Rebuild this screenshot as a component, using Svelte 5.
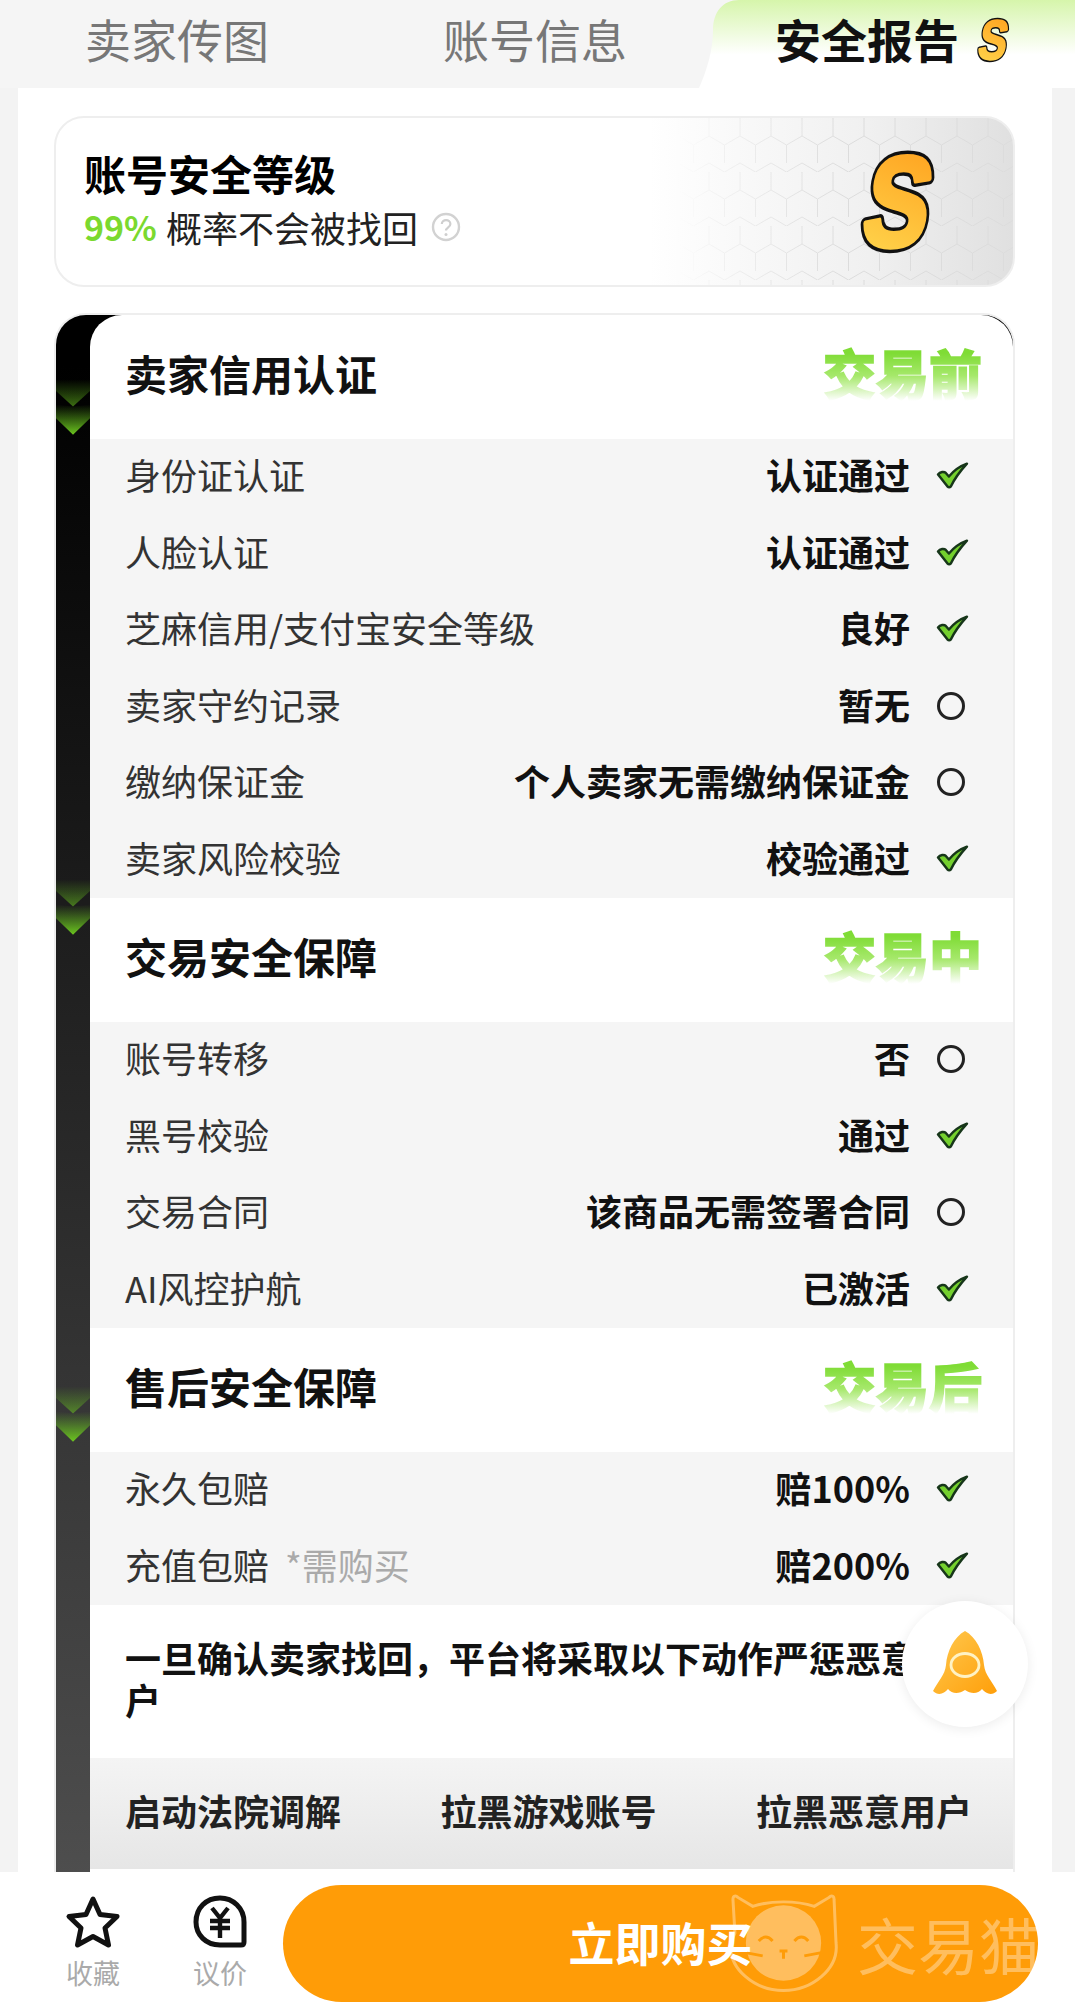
<script lang="ts">
  const sections = [
    {
      title: '卖家信用认证', stage: '交易前', arrowTop: 64,
      rows: [
        { label: '身份证认证', value: '认证通过', ok: true },
        { label: '人脸认证', value: '认证通过', ok: true },
        { label: '芝麻信用/支付宝安全等级', value: '良好', ok: true },
        { label: '卖家守约记录', value: '暂无', ok: false },
        { label: '缴纳保证金', value: '个人卖家无需缴纳保证金', ok: false },
        { label: '卖家风险校验', value: '校验通过', ok: true }
      ]
    },
    {
      title: '交易安全保障', stage: '交易中', arrowTop: 564,
      rows: [
        { label: '账号转移', value: '否', ok: false },
        { label: '黑号校验', value: '通过', ok: true },
        { label: '交易合同', value: '该商品无需签署合同', ok: false },
        { label: 'AI风控护航', value: '已激活', ok: true }
      ]
    },
    {
      title: '售后安全保障', stage: '交易后', arrowTop: 1071,
      rows: [
        { label: '永久包赔', value: '赔100%', ok: true },
        { label: '充值包赔', note: '*需购买', value: '赔200%', ok: true }
      ]
    }
  ];

  const actions = ['启动法院调解', '拉黑游戏账号', '拉黑恶意用户'];
</script>

{#snippet badge(cls)}
  <svg class={cls} viewBox="0 0 90 106" aria-hidden="true">
    <defs>
      <linearGradient id="{cls}-fill" x1="0.6" y1="0" x2="0.4" y2="1">
        <stop offset="0" stop-color="#ff9f1c" />
        <stop offset="1" stop-color="#ffd84f" />
      </linearGradient>
    </defs>
    <g transform="translate(40 97) skewX(-10) scale(0.76 1)">
      <text text-anchor="middle" class="badge-letter outline">S</text>
      <text text-anchor="middle" class="badge-letter" fill="url(#{cls}-fill)" stroke="url(#{cls}-fill)">S</text>
    </g>
  </svg>
{/snippet}

<div class="page">
  <nav class="tabs">
    <div class="tab first">卖家传图</div>
    <div class="tab second">账号信息</div>
    <div class="tab active">
      <span>安全报告</span>
      {@render badge('badge-small')}
    </div>
  </nav>

  <main class="content">
    <section class="level">
      <svg class="hex" aria-hidden="true">
        <defs>
          <pattern id="hexes" width="31" height="54" patternUnits="userSpaceOnUse">
            <path d="M15.5 -9 L31 0 V18 L15.5 27 L0 18 V0 Z M15.5 27 V45 M0 45 L15.5 54 L31 45" fill="none" stroke="#dcdcdc" stroke-width="1" />
          </pattern>
          <linearGradient id="hex-fade" x1="0" x2="1" y1="0" y2="0">
            <stop offset="0" stop-color="#000" />
            <stop offset="0.5" stop-color="#fff" />
          </linearGradient>
          <mask id="hex-mask"><rect width="100%" height="100%" fill="url(#hex-fade)" /></mask>
        </defs>
        <rect width="100%" height="100%" fill="url(#hexes)" mask="url(#hex-mask)" />
      </svg>
      <div class="level-text">
        <h2>账号安全等级</h2>
        <p>
          <b>99%</b> 概率不会被找回
          <svg class="help" viewBox="0 0 30 30" aria-hidden="true">
            <circle cx="15" cy="15" r="13" fill="none" stroke="#d2d2d2" stroke-width="2.4" />
            <path d="M10.8 12 C10.8 6.8 19.4 7 19.4 12 C19.4 15.2 15 15.4 15 18.6" fill="none" stroke="#cfcfcf" stroke-width="2.2" />
            <circle cx="15" cy="22.4" r="1.5" fill="#cfcfcf" />
          </svg>
        </p>
      </div>
      {@render badge('badge-large')}
    </section>

    <section class="report">
      {#each sections as section}
        <svg class="arrows" style="top: {section.arrowTop}px" viewBox="0 0 35 58" aria-hidden="true">
          <defs>
            <linearGradient id="arrow-{section.arrowTop}" x1="0" x2="0" y1="0" y2="1">
              <stop offset="0" stop-color="#5fb81c" stop-opacity="0" />
              <stop offset="1" stop-color="#6cc61f" />
            </linearGradient>
          </defs>
          <path d="M0 0 H35 V12 L17.5 28 L0 12 Z" fill="url(#arrow-{section.arrowTop})" opacity="0.55" />
          <path d="M0 26 L17.5 28 L35 26 V40 L17.5 57 L0 40 Z" fill="url(#arrow-{section.arrowTop})" />
        </svg>
      {/each}

      <div class="report-body">
        {#each sections as section}
          <header class="section-head">
            <h3>{section.title}</h3>
            <span class="stage">{section.stage}</span>
          </header>
          <ul class="rows">
            {#each section.rows as row}
              <li>
                <span class="label">{row.label}{#if row.note}<em>{row.note}</em>{/if}</span>
                <strong>{row.value}</strong>
                {#if row.ok}
                  <svg class="mark" viewBox="0 0 32 27" aria-hidden="true">
                    <path d="M2 13 C4 10 8 10 9.5 11.5 L12.5 15 C17 9.5 23 5 30 2.5 C25 8 19 15 14.5 24.5 C13.5 25.5 12 25.5 11 24.5 Z" fill="#74d02e" stroke="#17361a" stroke-width="2.4" stroke-linejoin="round" />
                  </svg>
                {:else}
                  <span class="mark empty"></span>
                {/if}
              </li>
            {/each}
          </ul>
        {/each}

        <p class="notice">一旦确认卖家找回，平台将采取以下动作严惩恶意用户</p>
        <div class="actions">
          {#each actions as action}
            <span>{action}</span>
          {/each}
        </div>
      </div>
    </section>
  </main>

  <footer class="bar">
    <div class="bar-item">
      <svg viewBox="0 0 56 52" aria-hidden="true">
        <path d="M28 3 L35 18.5 L52 20.5 L40 32 L43.5 49 L28 40.5 L12.5 49 L16 32 L4 20.5 L21 18.5 Z" fill="none" stroke="#111" stroke-width="5" stroke-linejoin="round" />
      </svg>
      <span>收藏</span>
    </div>
    <div class="bar-item">
      <svg viewBox="0 0 56 54" aria-hidden="true">
        <path d="M28 3 C41 3 52 13 52 27 V47 C52 49 51 50 49 50 H28 C14 50 4 40 4 27 C4 13 14 3 28 3 Z" fill="none" stroke="#111" stroke-width="5" />
        <path d="M20 13 L28 23 L36 13 M18 26 H38 M18 33 H38 M28 23 V43" fill="none" stroke="#111" stroke-width="4.4" />
      </svg>
      <span>议价</span>
    </div>
    <button class="buy">立即购买</button>
  </footer>

  <button class="rocket" aria-label="rocket">
    <svg viewBox="0 0 66 66" aria-hidden="true">
      <defs>
        <linearGradient id="rocket-fill" x1="0" x2="1" y1="0" y2="1">
          <stop offset="0" stop-color="#ffc94f" />
          <stop offset="1" stop-color="#ff9f0a" />
        </linearGradient>
      </defs>
      <path d="M33 0 C44 6 51 20 52 34 C53 44 60 50 65 60 C60 65 54 63 50 58 C46 63 39 63 33 59 C27 63 20 63 16 58 C12 63 6 65 1 60 C6 50 13 44 14 34 C15 20 22 6 33 0 Z" fill="url(#rocket-fill)" />
      <ellipse cx="33" cy="34" rx="14" ry="11.5" fill="none" stroke="#fff2c4" stroke-width="2.8" />
    </svg>
  </button>

  <div class="watermark" aria-hidden="true">
    <svg viewBox="0 0 114 100">
      <path d="M8 40 L6 6 C6 2 9 2 11 4 L26 13 C44 7 70 7 88 13 L103 4 C105 2 108 2 108 6 L110 50 C113 76 86 98 57 98 C28 98 1 76 4 50 Z" fill="none" stroke="#fff" stroke-width="3" />
      <circle cx="57" cy="50" r="38" fill="#fff" />
      <path d="M32 48 Q39 40 46 48 M68 48 Q75 40 82 48 M53 58 H61 M57 58 V66 M20 60 L36 63 M94 60 L78 63" fill="none" stroke="#ff9c07" stroke-width="3" />
    </svg>
    <span>交易猫</span>
  </div>
</div>

<style>
  :global(body) {
    background: #f3f3f3;
    font-family: "Noto Sans CJK SC", "Noto Sans", sans-serif;
  }

  .page {
    position: relative;
    display: flex;
    flex-direction: column;
    height: 100vh;
    overflow: hidden;
  }

  .tabs {
    display: flex;
    flex: none;
    height: 88px;
    background: #f5f5f5;
  }

  .tab {
    padding-top: 11px;
    font-size: 46px;
    line-height: 54px;
    color: #777;
    box-sizing: border-box;
  }

  .first {
    width: 355px;
    padding-left: 85px;
  }

  .second {
    width: 344px;
    padding-left: 88px;
  }

  .active {
    display: flex;
    gap: 14px;
    width: 376px;
    padding-left: 76px;
    font-weight: 700;
    color: #111;
    background: linear-gradient(#d6f5ab, #fff 62%);
    clip-path: path("M0 88 C8 70 14 50 14 30 C14 12 24 0 40 0 L376 0 L376 88 Z");
  }

  .badge-small {
    width: 39px;
    height: 46px;
    margin-top: 6px;
    overflow: visible;
  }

  .badge-letter {
    font-family: "Liberation Sans", sans-serif;
    font-size: 128px;
    font-weight: 700;
    stroke-width: 5px;
    stroke-linejoin: round;
  }

  .outline {
    fill: #111;
    stroke: #111;
    stroke-width: 12px;
  }

  .content {
    flex: 1;
    min-height: 0;
    margin: 0 23px 0 18px;
    padding: 28px 37px 0 36px;
    overflow: hidden;
    background: #fff;
  }

  .level {
    position: relative;
    display: flex;
    align-items: center;
    justify-content: space-between;
    height: 171px;
    margin-bottom: 26px;
    padding: 0 72px 0 28px;
    overflow: hidden;
    box-sizing: border-box;
    border: 2px solid #eee;
    border-radius: 30px;
    background: linear-gradient(90deg, #fff 62%, #f0f0f0 85%, #e0e0e0);
  }

  .hex {
    position: absolute;
    top: 0;
    left: 65%;
    width: 35%;
    height: 100%;
  }

  .level-text {
    position: relative;
    padding-bottom: 4px;
  }

  .level h2 {
    margin: 0 0 4px;
    font-size: 42px;
    line-height: 50px;
    font-weight: 700;
    color: #000;
  }

  .level p {
    display: flex;
    align-items: center;
    gap: 9px;
    margin: 0;
    font-size: 36px;
    line-height: 50px;
    color: #222;
  }

  .level b {
    font-size: 34px;
    color: #7bd92f;
  }

  .help {
    width: 30px;
    height: 30px;
    margin-left: 4px;
  }

  .badge-large {
    position: relative;
    width: 90px;
    height: 106px;
    overflow: visible;
  }

  .report {
    position: relative;
    height: 1700px;
    box-sizing: border-box;
    border: 2px solid #eee;
    border-bottom: 0;
    border-radius: 32px 32px 0 0;
    background: linear-gradient(#000 3%, #1f1f1f 38%, #555 100%);
  }

  .arrows {
    position: absolute;
    left: 0;
    width: 34px;
    height: 57px;
  }

  .report-body {
    margin-left: 34px;
    height: 100%;
    border-radius: 32px 32px 0 0;
    background: #fff;
  }

  .section-head {
    display: flex;
    align-items: center;
    justify-content: space-between;
    height: 124px;
    padding: 0 31px 10px 35px;
    box-sizing: border-box;
  }

  .section-head h3 {
    margin: 0;
    font-size: 42px;
    font-weight: 700;
    color: #111;
  }

  .stage {
    font-size: 53px;
    font-weight: 900;
    color: transparent;
    -webkit-text-stroke: 1.5px transparent;
    background: linear-gradient(#7fdc35 25%, #a6e86b 55%, #fff 88%);
    -webkit-background-clip: text;
    background-clip: text;
  }

  .rows {
    margin: 0;
    padding: 0;
    list-style: none;
    background: #f5f5f5;
  }

  .rows li {
    display: flex;
    align-items: center;
    height: 76.5px;
    padding: 0 44px 6px 35px;
    box-sizing: border-box;
    font-size: 36px;
  }

  .label {
    flex: 1;
    color: #333;
  }

  .label em {
    margin-left: 16px;
    font-style: normal;
    color: #aaa;
  }

  .rows strong {
    font-weight: 700;
    color: #111;
  }

  .mark {
    flex: none;
    width: 33px;
    height: 28px;
    margin: 2px 0 0 26px;
  }

  .empty {
    width: 28px;
    height: 28px;
    margin: 4px 4px 0 27px;
    box-sizing: border-box;
    border: 3px solid #222;
    border-radius: 50%;
  }

  .notice {
    height: 153px;
    margin: 0;
    padding: 31px 40px 0 35px;
    box-sizing: border-box;
    font-size: 36px;
    line-height: 42px;
    font-weight: 700;
    color: #111;
  }

  .actions {
    display: flex;
    align-items: center;
    justify-content: space-between;
    height: 111px;
    padding: 0 41px 8px 35px;
    box-sizing: border-box;
    font-size: 36px;
    font-weight: 700;
    color: #222;
    background: linear-gradient(#f4f4f4, #e6e6e6);
  }

  .bar {
    display: flex;
    align-items: center;
    flex: none;
    height: 141px;
    padding: 0 37px 0 58px;
    box-sizing: border-box;
    background: #fff;
  }

  .bar-item {
    display: flex;
    flex-direction: column;
    align-items: center;
    width: 70px;
    margin-right: 57px;
    font-size: 27px;
    line-height: 36px;
    color: #aaa;
  }

  .bar-item svg {
    width: 56px;
    height: 54px;
    margin-bottom: 6px;
  }

  .bar-item:nth-child(2) {
    margin-right: 28px;
  }

  .buy {
    flex: 1;
    height: 117px;
    margin-bottom: -2px;
    padding: 0 0 6px;
    border: 0;
    border-radius: 59px;
    font: 700 46px "Noto Sans CJK SC", sans-serif;
    color: #fff;
    background: #ff9c07;
  }

  .rocket {
    position: absolute;
    left: 902px;
    top: 1601px;
    display: flex;
    align-items: center;
    justify-content: center;
    width: 126px;
    height: 126px;
    padding: 0;
    border: 0;
    border-radius: 50%;
    background: #fff;
    box-shadow: 0 2px 12px rgba(0, 0, 0, 0.08);
  }

  .rocket svg {
    width: 66px;
    height: 66px;
  }

  .watermark {
    position: absolute;
    left: 727px;
    top: 1893px;
    display: flex;
    align-items: center;
    gap: 17px;
    opacity: 0.35;
    color: #fff;
    font-size: 61px;
    pointer-events: none;
  }

  .watermark svg {
    width: 113px;
    height: 100px;
  }
</style>
